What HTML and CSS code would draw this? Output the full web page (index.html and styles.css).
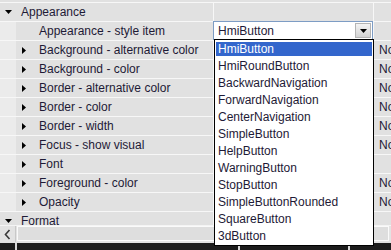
FILE: index.html
```html
<!DOCTYPE html>
<html lang="en">

<head>
    <meta charset="UTF-8">
    <meta name="viewport" content="width=device-width, initial-scale=1.0">
    <title>Properties</title>
    <link rel="stylesheet" href="styles.css">
</head>

<body>
    <div class="grid">
        <div class="row group">
            <div class="name"><svg class="tri" width="7" height="4"><polygon points="0,0 7,0 3.5,4" /></svg>Appearance</div>
            <div class="value"></div>
            <div class="extra"></div>
        </div>
        <div class="row child">
            <div class="name"><span class="gutter"></span><span class="spacer"></span>Appearance - style item</div>
            <div class="value edit">
                <div class="combo">
                    <span class="combo-text">HmiButton</span>
                    <span class="combo-btn"><svg width="7" height="4"><polygon points="0,0 7,0 3.5,4" /></svg></span>
                </div>
            </div>
            <div class="extra"></div>
        </div>
        <div class="row child">
            <div class="name"><span class="gutter"></span><svg class="tri" width="4" height="7"><polygon points="0,0 4,3.5 0,7" /></svg>Background - alternative color</div>
            <div class="value"></div>
            <div class="extra">None</div>
        </div>
        <div class="row child">
            <div class="name"><span class="gutter"></span><svg class="tri" width="4" height="7"><polygon points="0,0 4,3.5 0,7" /></svg>Background - color</div>
            <div class="value"></div>
            <div class="extra">None</div>
        </div>
        <div class="row child">
            <div class="name"><span class="gutter"></span><svg class="tri" width="4" height="7"><polygon points="0,0 4,3.5 0,7" /></svg>Border - alternative color</div>
            <div class="value"></div>
            <div class="extra">None</div>
        </div>
        <div class="row child">
            <div class="name"><span class="gutter"></span><svg class="tri" width="4" height="7"><polygon points="0,0 4,3.5 0,7" /></svg>Border - color</div>
            <div class="value"></div>
            <div class="extra">None</div>
        </div>
        <div class="row child">
            <div class="name"><span class="gutter"></span><svg class="tri" width="4" height="7"><polygon points="0,0 4,3.5 0,7" /></svg>Border - width</div>
            <div class="value"></div>
            <div class="extra">None</div>
        </div>
        <div class="row child">
            <div class="name"><span class="gutter"></span><svg class="tri" width="4" height="7"><polygon points="0,0 4,3.5 0,7" /></svg>Focus - show visual</div>
            <div class="value"></div>
            <div class="extra">None</div>
        </div>
        <div class="row child">
            <div class="name"><span class="gutter"></span><svg class="tri" width="4" height="7"><polygon points="0,0 4,3.5 0,7" /></svg>Font</div>
            <div class="value"></div>
            <div class="extra"></div>
        </div>
        <div class="row child">
            <div class="name"><span class="gutter"></span><svg class="tri" width="4" height="7"><polygon points="0,0 4,3.5 0,7" /></svg>Foreground - color</div>
            <div class="value"></div>
            <div class="extra">None</div>
        </div>
        <div class="row child">
            <div class="name"><span class="gutter"></span><svg class="tri" width="4" height="7"><polygon points="0,0 4,3.5 0,7" /></svg>Opacity</div>
            <div class="value"></div>
            <div class="extra">None</div>
        </div>
        <div class="row group">
            <div class="name"><svg class="tri" width="7" height="4"><polygon points="0,0 7,0 3.5,4" /></svg>Format</div>
            <div class="value"></div>
            <div class="extra"></div>
        </div>
    </div>

    <div class="scrollbar">
        <div class="scroll-btn">
            <svg width="16" height="16"><polyline points="9.5,4 5.5,8.5 9.5,13" fill="none" stroke="#3a3a3a" stroke-width="1.6" /></svg>
        </div>
        <div class="thumb"></div>
    </div>
    <div class="bottom-bar">
        <span class="tick tick-1"></span>
        <span class="tick tick-2"></span>
        <span class="tick tick-3"></span>
    </div>

    <ul class="dropdown">
        <li class="selected">HmiButton</li>
        <li>HmiRoundButton</li>
        <li>BackwardNavigation</li>
        <li>ForwardNavigation</li>
        <li>CenterNavigation</li>
        <li>SimpleButton</li>
        <li>HelpButton</li>
        <li>WarningButton</li>
        <li>StopButton</li>
        <li>SimpleButtonRounded</li>
        <li>SquareButton</li>
        <li>3dButton</li>
    </ul>
</body>

</html>
```

FILE: styles.css
```css
* {
    box-sizing: border-box;
}

body {
    font-family: "Liberation Sans", Arial, sans-serif;
    font-size: 12px;
    color: #1e1a36;
    margin: 0;
    padding: 0;
    width: 391px;
    height: 250px;
    overflow: hidden;
    background-color: #e1e1e1;
}

.grid {
    padding-top: 2px;
    height: 225px;
    overflow: hidden;
}

.row {
    display: grid;
    grid-template-columns: 213px 160px 1fr;
    height: 19px;
    border-top: 1px solid #f7f7f7;
    background-color: #e1e1e1;
}

.name {
    display: flex;
    align-items: center;
    white-space: nowrap;
    overflow: hidden;
}

.group .name {
    padding-left: 5px;
}

.group .tri {
    margin-right: 9px;
}

.gutter {
    align-self: stretch;
    width: 16px;
    background-color: #ebebeb;
}

.child .tri {
    margin-left: 6px;
    margin-right: 13px;
}

.spacer {
    width: 23px;
}

.value,
.extra {
    border-left: 1px solid #f7f7f7;
}

.extra {
    padding-left: 5px;
    line-height: 18px;
    white-space: nowrap;
    overflow: hidden;
}

.value.edit {
    border-left: none;
}

.combo {
    display: flex;
    align-items: center;
    height: 19px;
    margin-top: -1px;
    border: 1px solid #7d9cc4;
    background-color: #fff;
}

.combo-text {
    flex: 1;
    padding-left: 4px;
}

.combo-btn {
    display: flex;
    align-items: center;
    justify-content: center;
    width: 16px;
    height: 15px;
    margin-right: 1px;
    border: 1px solid #b4b4b4;
    background: linear-gradient(#f4f4f4, #d2d2d2);
}

.scrollbar {
    display: flex;
    height: 17px;
    background-color: #e3e3e3;
    border-top: 1px solid #f4f4f4;
}

.scroll-btn {
    width: 16px;
    border-right: 1px solid #c8c8c8;
}

.thumb {
    flex: 1;
    margin: 0 2px 1px 1px;
    border: 1px solid #fafafa;
    background-color: #dedede;
}

.bottom-bar {
    position: relative;
    height: 8px;
    margin-top: 1px;
    background-color: #1c1c1c;
}

.tick {
    position: absolute;
    top: 0;
    width: 2px;
    height: 8px;
    background-color: #d8d8d8;
}

.tick-1 {
    left: 15px;
}

.tick-2 {
    left: 238px;
}

.tick-3 {
    left: 348px;
}

.dropdown {
    position: absolute;
    left: 214px;
    top: 39px;
    width: 160px;
    height: 207px;
    margin: 0;
    padding: 2px 1px;
    list-style: none;
    background-color: #fff;
    border: 1px solid #000;
}

.dropdown li {
    height: 14px;
    line-height: 14px;
    margin-bottom: 3px;
    padding-left: 2px;
    white-space: nowrap;
}

.dropdown li.selected {
    background-color: #3366cc;
    color: #fff;
}
```
